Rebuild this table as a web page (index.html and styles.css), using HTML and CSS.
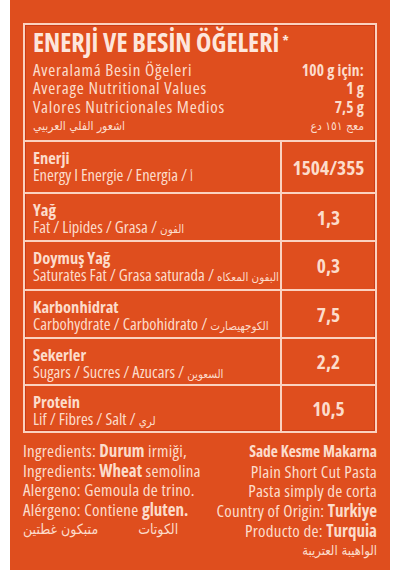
FILE: index.html
```html
<!DOCTYPE html>
<html lang="tr">
<head>
<meta charset="utf-8">
<title>Besin Öğeleri</title>
<link rel="stylesheet" href="styles.css">
</head>
<body>
<div class="page">
  <div class="box">
    <div class="head">
      <h1 class="title">ENERJİ VE BESİN ÖĞELERİ<span class="star">*</span></h1>
      <div class="hrow"><span>Averalamá Besin Öğeleri</span><b>100 g için:</b></div>
      <div class="hrow"><span>Average Nutritional Values</span><b>1 g</b></div>
      <div class="hrow"><span>Valores Nutricionales Medios</span><b>7,5 g</b></div>
      <div class="hrow ar"><span>اشعور الفلي العربيي</span><span>معج ١٥١ دع</span></div>
    </div>
    <div class="row h52">
      <div class="name"><b>Enerji</b><span>Energy I Energie / Energia / <i class="arw">أ</i></span></div>
      <div class="val">1504/355</div>
    </div>
    <div class="row h48">
      <div class="name"><b>Yağ</b><span>Fat / Lipides / Grasa / <i class="arw">الفون</i></span></div>
      <div class="val">1,3</div>
    </div>
    <div class="row h49">
      <div class="name"><b>Doymuş Yağ</b><span>Saturates Fat / Grasa saturada / <i class="arw">البفون المعكاه</i></span></div>
      <div class="val">0,3</div>
    </div>
    <div class="row h48">
      <div class="name"><b>Karbonhidrat</b><span>Carbohydrate / Carbohidrato / <i class="arw">الكوجهيصارت</i></span></div>
      <div class="val">7,5</div>
    </div>
    <div class="row h47">
      <div class="name"><b>Sekerler</b><span>Sugars / Sucres / Azucars / <i class="arw">السعوين</i></span></div>
      <div class="val">2,2</div>
    </div>
    <div class="row h47">
      <div class="name"><b>Protein</b><span>Lif / Fibres / Salt / <i class="arw">لري</i></span></div>
      <div class="val">10,5</div>
    </div>
  </div>
  <div class="foot">
    <div class="fcol left">
      <p>Ingredients: <b>Durum</b> irmiği,</p>
      <p>Ingredients: <b>Wheat</b> semolina</p>
      <p>Alergeno: Gemoula de trino.</p>
      <p>Alérgeno: Contiene <b>gluten.</b></p>
      <p class="ar2"><span>متبكون غطتين</span><span>الكوتات</span></p>
    </div>
    <div class="fcol right">
      <p><b class="cond">Sade Kesme Makarna</b></p>
      <p>Plain Short Cut Pasta</p>
      <p>Pasta simply de corta</p>
      <p>Country of Origin: <b>Turkiye</b></p>
      <p>Producto de: <b>Turquia</b></p>
      <p class="ar3">الواهيبة العتريبة</p>
    </div>
  </div>
</div>
</body>
</html>
```
FILE: styles.css
```css
* { box-sizing: border-box; }
html, body { margin: 0; padding: 0; background: #ffffff; }
.page {
  width: 380px;
  height: 570px;
  margin-left: 10px;
  background: #df4e1e;
  padding: 23px 13px 0 13px;
  color: #fcdccb;
  font-family: "Open Sans", "DejaVu Sans", sans-serif;
  font-stretch: 87.5%;
}
.box {
  border: 2px solid #fbd2c0;
  box-shadow: inset 0 0 0 1px #c93a16;
}
.head {
  height: 115px;
  padding: 3px 11px 0 8px;
}
.title {
  margin: 0 0 4.5px 0;
  font-size: 26px;
  line-height: 28px;
  font-weight: bold;
  font-stretch: 75%;
  color: #fde6dc;
  white-space: nowrap;
}
.star { font-size: 14px; vertical-align: top; position: relative; top: -1px; margin-left: 3px; }
.hrow {
  display: flex;
  justify-content: space-between;
  font-size: 17px;
  line-height: 18.5px;
  letter-spacing: 0.75px;
  white-space: nowrap;
}
.hrow b { font-size: 15.5px; letter-spacing: 0.2px; }
.ar { font-family: "DejaVu Sans", sans-serif; font-size: 12px; line-height: 20px; letter-spacing: 0; }
.row {
  display: grid;
  grid-template-columns: minmax(0, 1fr) 93px;
  border-top: 2px solid #fbd2c0;
}
.h52 { height: 52px; }
.h49 { height: 49px; }
.h48 { height: 48px; }
.h47 { height: 47px; }
.name {
  border-right: 2px solid #fbd2c0;
  padding: 7px 6px 0 8px;
  display: flex;
  flex-direction: column;
  font-size: 16.5px;
  line-height: 17px;
  font-stretch: 75%;
  white-space: nowrap;
  overflow: hidden;
  min-width: 0;
}
.name b { font-size: 16.5px; }
.arw { font-style: normal; font-family: "DejaVu Sans", sans-serif; font-size: 11.5px; }
.val {
  display: flex;
  align-items: center;
  justify-content: center;
  font-weight: bold;
  font-size: 19.5px;
  font-stretch: 75%;
}
.foot {
  display: flex;
  justify-content: space-between;
  padding-top: 8px;
  font-size: 17px;
  line-height: 19.7px;
  letter-spacing: 0.25px;
}
.foot p { margin: 0; white-space: nowrap; }
.foot b { letter-spacing: 0; }
.foot b.cond { font-stretch: 75%; font-size: 15.5px; letter-spacing: 0; }
.right { text-align: right; }
.ar2 { display: flex; gap: 40px; font-family: "DejaVu Sans", sans-serif; font-size: 14px; letter-spacing: 0; }
.ar3 { font-family: "DejaVu Sans", sans-serif; font-size: 13px; letter-spacing: 0; }
```
